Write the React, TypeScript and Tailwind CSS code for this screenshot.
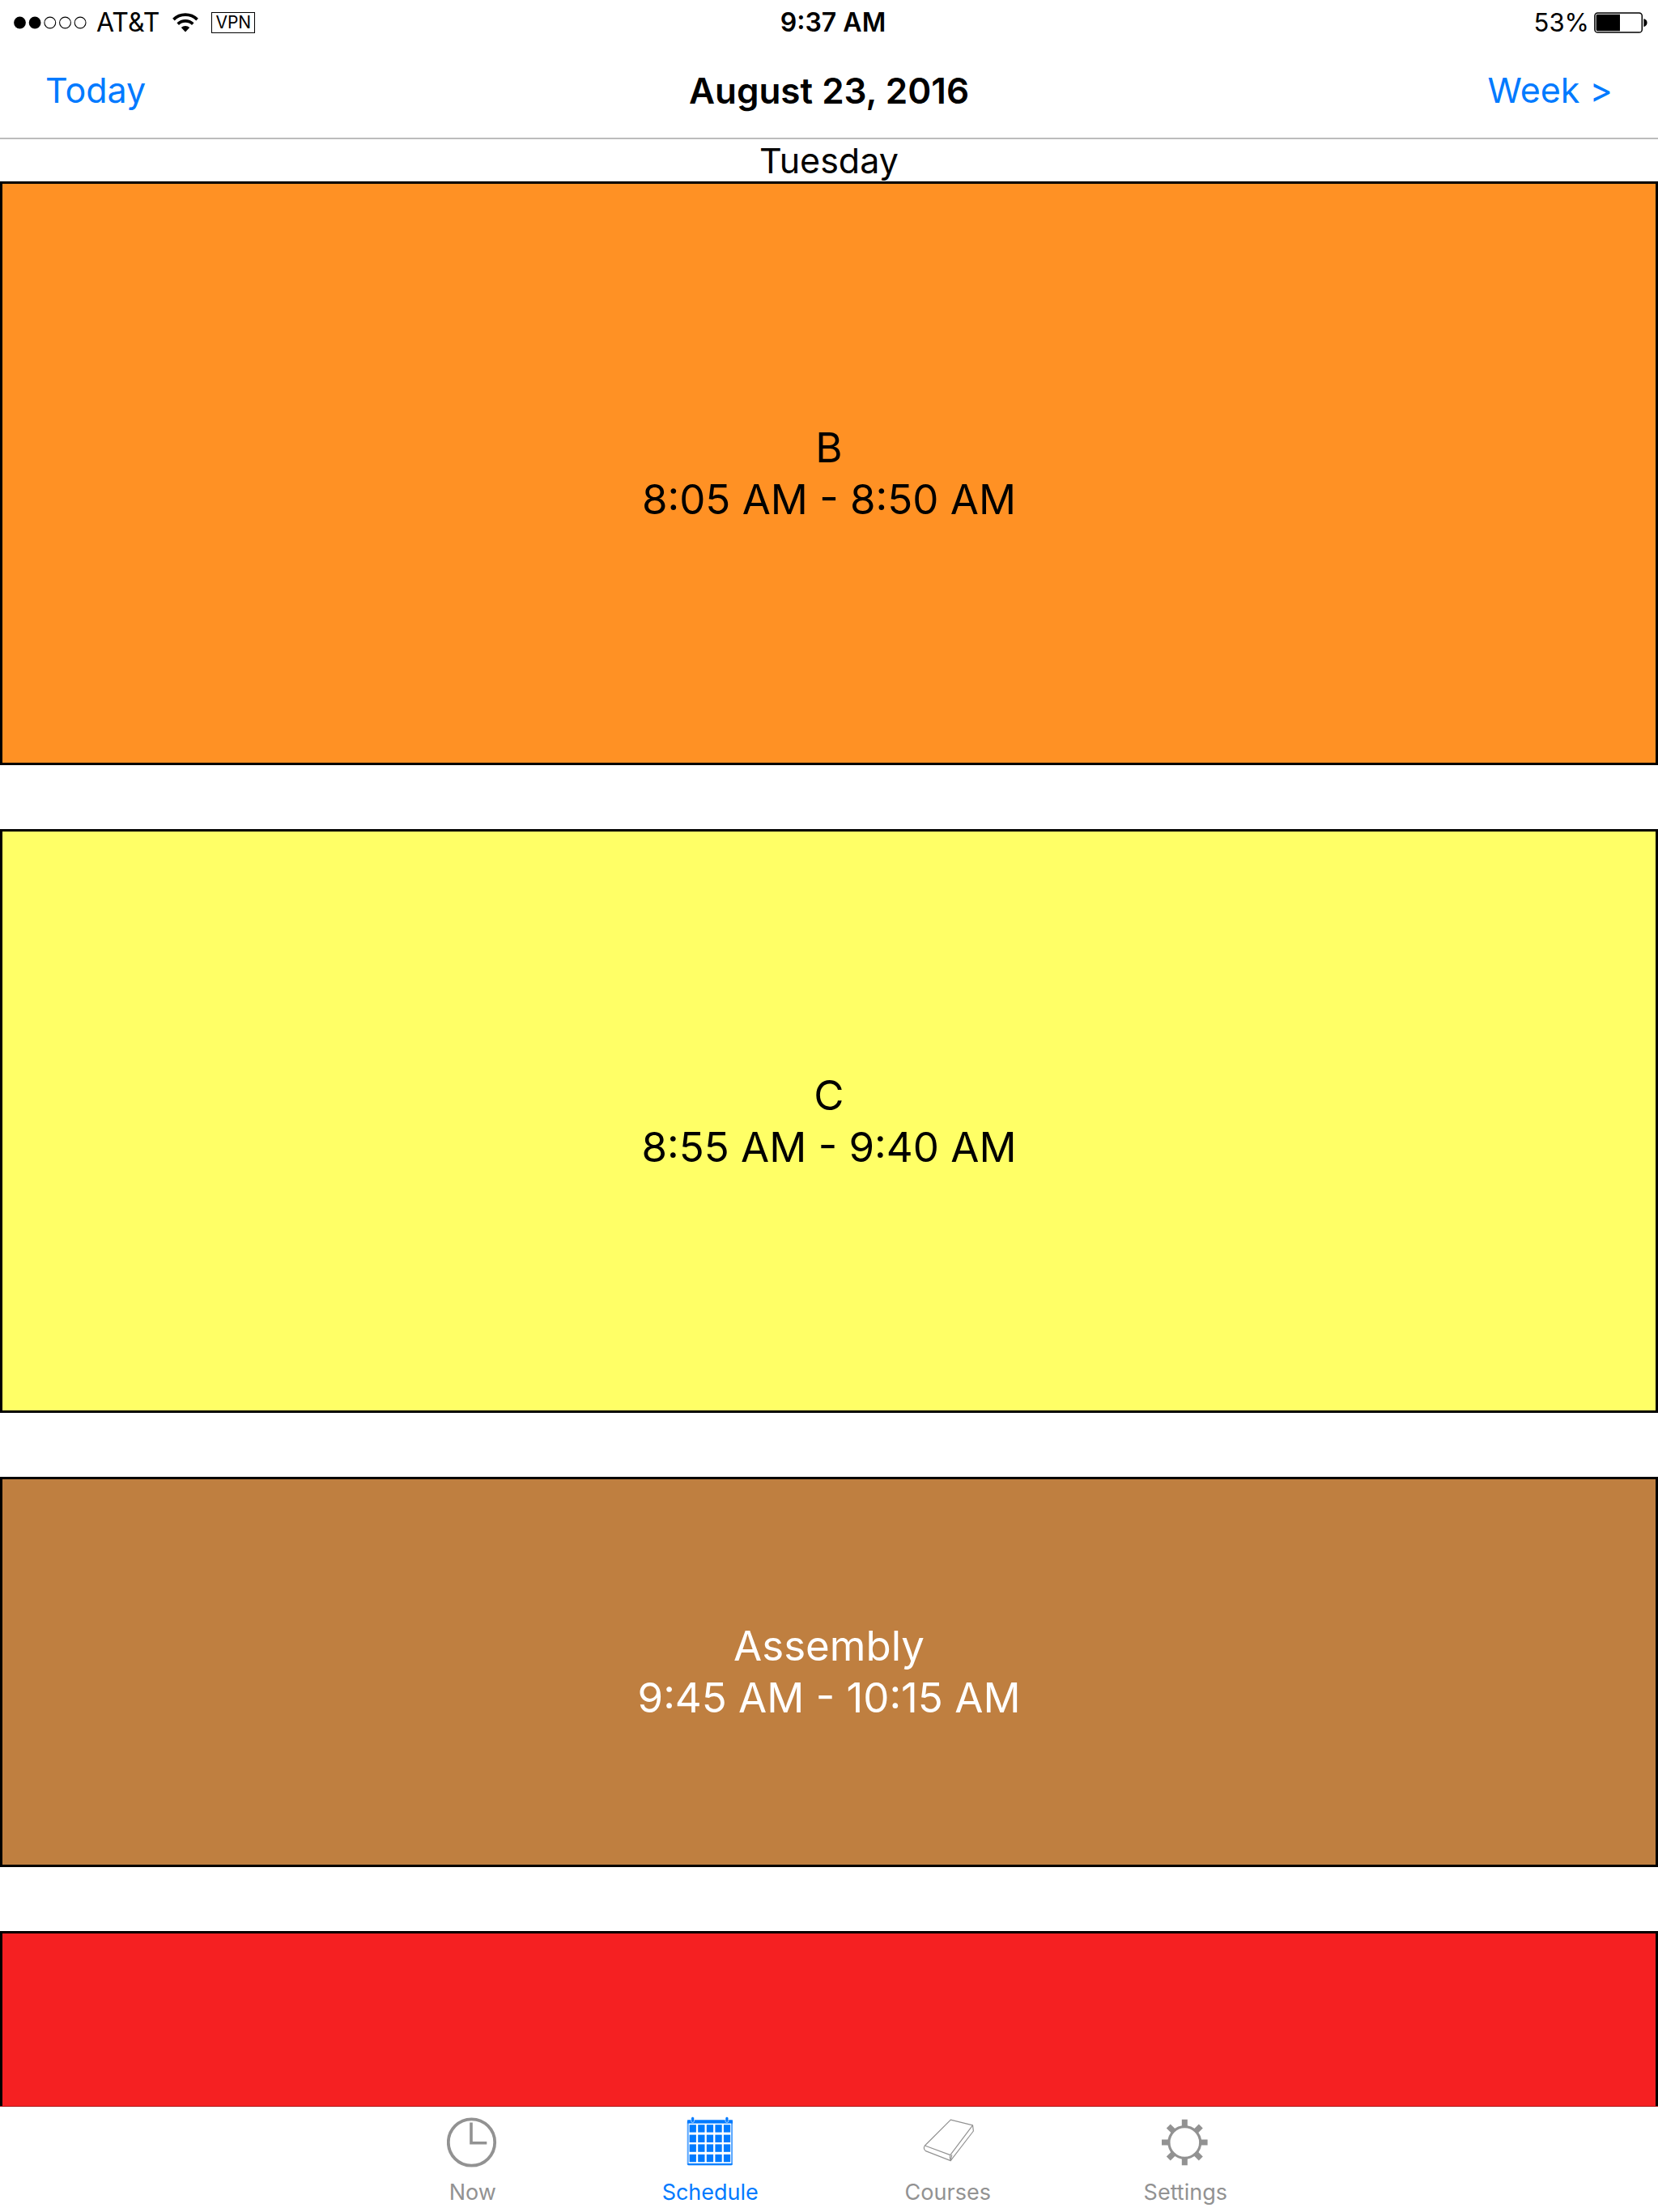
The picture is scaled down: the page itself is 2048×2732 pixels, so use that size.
import type { ReactNode } from "react";

type Block = { name: string; time: string; style: string };

const blocks: Block[] = [
  { name: "B", time: "8:05 AM - 8:50 AM", style: "h-[721px] bg-[#ff9124] text-black" },
  { name: "C", time: "8:55 AM - 9:40 AM", style: "h-[721px] bg-[#ffff66] text-black" },
  { name: "Assembly", time: "9:45 AM - 10:15 AM", style: "h-[482px] bg-[#bf7f40] text-white" },
];

function SignalDots() {
  return (
    <svg className="h-4 w-[91px]" viewBox="0 0 91 16" aria-label="Signal strength" role="img">
      <circle cx="8.5" cy="8" r="7.4" />
      <circle cx="27.1" cy="8" r="7.4" />
      <g fill="none" stroke="black" strokeWidth="1.1">
        <circle cx="45.8" cy="8" r="6.9" />
        <circle cx="64.5" cy="8" r="6.9" />
        <circle cx="83.1" cy="8" r="6.9" />
      </g>
    </svg>
  );
}

function WifiIcon() {
  return (
    <svg className="ml-4 h-6 w-8" viewBox="0 0 32 24" aria-label="Wi-Fi" role="img">
      <g fill="none" stroke="black" strokeWidth="3.7">
        <path d="M1.4 8.1a21 21 0 0 1 29.2 0" />
        <path d="M6.7 13.7a13.4 13.4 0 0 1 18.6 0" />
      </g>
      <path d="M10.8 18a7.6 7.6 0 0 1 10.4 0L16 23.4z" />
    </svg>
  );
}

function BatteryIcon() {
  return (
    <svg className="h-[26px] w-[67px]" viewBox="0 0 67 26" aria-label="Battery" role="img">
      <rect x="0.9" y="0.9" width="58.4" height="24.2" rx="3.6" fill="white" stroke="black" strokeWidth="1.5" />
      <path d="M4 2.8H32V23.2H4a1.4 1.4 0 0 1-1.4-1.4V4.2A1.4 1.4 0 0 1 4 2.8z" />
      <path d="M61.4 8.2c2.8 0.6 4.2 2.4 4.2 4.8s-1.4 4.4-4.2 5z" />
    </svg>
  );
}

function ClockIcon() {
  return (
    <svg className="size-16" viewBox="0 0 64 64" fill="none" stroke="#929292" strokeWidth="3.8" aria-hidden="true">
      <circle cx="30.5" cy="32" r="28.7" />
      <path d="M30 7.5V32.7H49.3" strokeWidth="3.6" />
    </svg>
  );
}

const columns = [6.6, 17.2, 27.8, 38.4, 48.9];
const rows = [10.2, 22.6, 34.4, 46.9];

function CalendarIcon() {
  return (
    <svg className="size-16" viewBox="0 0 64 64" fill="#007aff" aria-hidden="true">
      <rect x="4.7" y="5.4" width="54.4" height="54" rx="1" fill="none" stroke="#57a6ff" strokeWidth="2" />
      <rect x="4" y="4.4" width="56" height="4.2" />
      <rect x="4.4" y="58" width="55" height="1.8" />
      <rect x="8.7" y="0.4" width="3.8" height="7" rx="1.8" stroke="white" strokeWidth="0.6" />
      <rect x="51" y="0.4" width="3.8" height="7" rx="1.8" stroke="white" strokeWidth="0.6" />
      {rows.map((y) =>
        columns.map((x) => <rect key={`${x}-${y}`} x={x} y={y} width="8.3" height="9.4" />),
      )}
    </svg>
  );
}

function BookIcon() {
  return (
    <svg className="size-16" viewBox="0 0 64 64" fill="none" stroke="#929292" strokeWidth="1.2" strokeLinejoin="round" aria-hidden="true">
      <path d="M35.3 4.2 62.5 10.8 34.8 47.6 3.4 36z" />
      <path d="M3.4 36C1.9 38.2 2 40.6 4.4 42.6L35.2 54.6 63.4 18 62.5 10.8" />
      <path d="M34.8 47.6C34 50.2 34.2 52.6 35.2 54.6L36.8 47.4" />
    </svg>
  );
}

const teeth = [0, 45, 90, 135, 180, 225, 270, 315];

function GearIcon() {
  return (
    <svg className="size-16" viewBox="0 0 64 64" aria-hidden="true">
      <circle cx="31.3" cy="32" r="19.4" fill="none" stroke="#929292" strokeWidth="3.2" />
      {teeth.map((angle) => (
        <rect key={angle} x="27.8" y="3.7" width="7" height="9.3" fill="#929292" transform={`rotate(${angle} 31.3 32)`} />
      ))}
    </svg>
  );
}

function Tab({ label, icon, active = false }: { label: string; icon: ReactNode; active?: boolean }) {
  return (
    <button
      type="button"
      aria-current={active ? "page" : undefined}
      className={`flex flex-col items-center gap-3.5 text-[27px] leading-8 ${active ? "text-[#007aff]" : "text-[#929292]"}`}
    >
      {icon}
      {label}
    </button>
  );
}

export default function App() {
  return (
    <div className="flex h-screen flex-col overflow-hidden bg-white font-['Inter',sans-serif] text-black">
      <header className="border-b-2 border-[#bcbcbc]">
        <div className="grid h-14 grid-cols-[1fr_auto_1fr] items-center pr-3 pl-4 text-[32px]">
          <div className="flex items-center">
            <SignalDots />
            <span className="ml-3">AT&amp;T</span>
            <WifiIcon />
            <span className="ml-4 border border-black px-1 text-[21px] leading-6">VPN</span>
          </div>
          <span className="pl-1.5 font-semibold">9:37 AM</span>
          <div className="flex items-center justify-end gap-1.5">
            <span className="text-[31px]">53%</span>
            <BatteryIcon />
          </div>
        </div>
        <nav className="grid h-[114px] grid-cols-[1fr_auto_1fr] items-center px-14 pb-[3px] text-[44px] leading-none">
          <button type="button" className="justify-self-start text-[43px] text-[#007aff]">Today</button>
          <h1 className="font-semibold">August 23, 2016</h1>
          <button type="button" className="justify-self-end text-[43px] text-[#007aff]">Week &gt;</button>
        </nav>
      </header>

      <main className="flex min-h-0 flex-1 flex-col">
        <h2 className="h-[52px] shrink-0 text-center text-[43px] leading-[52px]">Tuesday</h2>
        <div className="flex min-h-0 flex-1 flex-col gap-[79px]">
          {blocks.map((block) => (
            <section
              key={block.name}
              className={`flex shrink-0 flex-col items-center justify-center border-3 border-black text-[51px] leading-[64px] ${block.style}`}
            >
              <h3>{block.name}</h3>
              <p>{block.time}</p>
            </section>
          ))}
          <section className="min-h-0 flex-1 border-3 border-b-0 border-black bg-[#f52022]" />
        </div>
      </main>

      <footer className="flex justify-center border-t border-[#ad1618] pt-3 pb-2">
        <div className="grid w-[1174px] grid-cols-4">
          <Tab label="Now" icon={<ClockIcon />} />
          <Tab label="Schedule" icon={<CalendarIcon />} active />
          <Tab label="Courses" icon={<BookIcon />} />
          <Tab label="Settings" icon={<GearIcon />} />
        </div>
      </footer>
    </div>
  );
}
